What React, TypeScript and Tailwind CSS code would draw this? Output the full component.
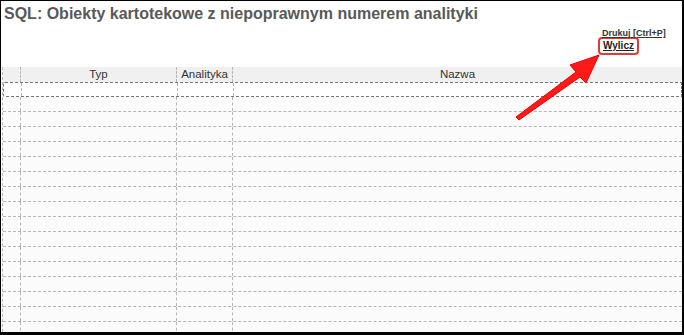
import React from 'react';

const rows = Array.from({ length: 17 }, (_, i) => i);

export default function App() {
  return (
    <div className="relative w-[684px] h-[335px] overflow-hidden bg-white border-l border-t border-r-2 border-b-[3px] border-black font-['Liberation_Sans',Arial,sans-serif]">
      {/* Title */}
      <h1 className="pl-[3px] pt-[3px] text-[16px] leading-[20px] font-bold text-[#595959] whitespace-nowrap">
        SQL: Obiekty kartotekowe z niepoprawnym numerem analityki
      </h1>

      {/* Actions */}
      <div className="flex flex-col items-start ml-[601px] mt-[4px] text-[9px] leading-[10px] font-bold text-[#333]">
        <span className="underline underline-offset-1 relative z-10">Drukuj [Ctrl+P]</span>
        <span className="-mt-px -ml-[4px] px-[3px] py-[2px] border-2 border-[#e53935] rounded-[4px] underline text-[10px] leading-[10px] text-[#222]">
          Wylicz
        </span>
      </div>

      {/* Grid */}
      <div className="mt-[12px] ml-[1px] border-l border-dashed border-[#b5b5b5]">
        <div className="flex h-[16px] bg-[#f0f0f0] border-b border-dashed border-[#8c8c8c] text-[11.5px] leading-[15px] text-[#333]">
          <div className="w-[18px] border-r border-dashed border-[#b5b5b5]" />
          <div className="w-[156px] text-center border-r border-dashed border-[#b5b5b5]">Typ</div>
          <div className="w-[56px] text-center border-r border-dashed border-[#b5b5b5]">Analityka</div>
          <div className="flex-1 text-center">Nazwa</div>
        </div>
        {rows.map((i) => (
          <div
            key={i}
            className={`flex h-[15px] border-b border-dashed ${
              i === 0 ? 'bg-white border-[#777] border-t border-x rounded-l-[2px] -mt-px' : 'bg-[#fbfbfb] border-[#b5b5b5]'
            }`}
          >
            <div className="w-[18px] border-r border-dashed border-[#b5b5b5]" />
            <div className="w-[156px] border-r border-dashed border-[#b5b5b5]" />
            <div className="w-[56px] border-r border-dashed border-[#b5b5b5]" />
            <div className="flex-1" />
          </div>
        ))}
      </div>

      {/* Red arrow pointing at Wylicz */}
      <svg className="absolute left-[505px] top-[47px]" width="100" height="75" viewBox="0 0 100 75">
        <path d="M10 69 L70 24 L64 17 L93 7 L80 35 L74 29 L13 72 Z" fill="#ff1a1a" stroke="#e00" strokeWidth="1" strokeLinejoin="round" />
      </svg>
    </div>
  );
}
